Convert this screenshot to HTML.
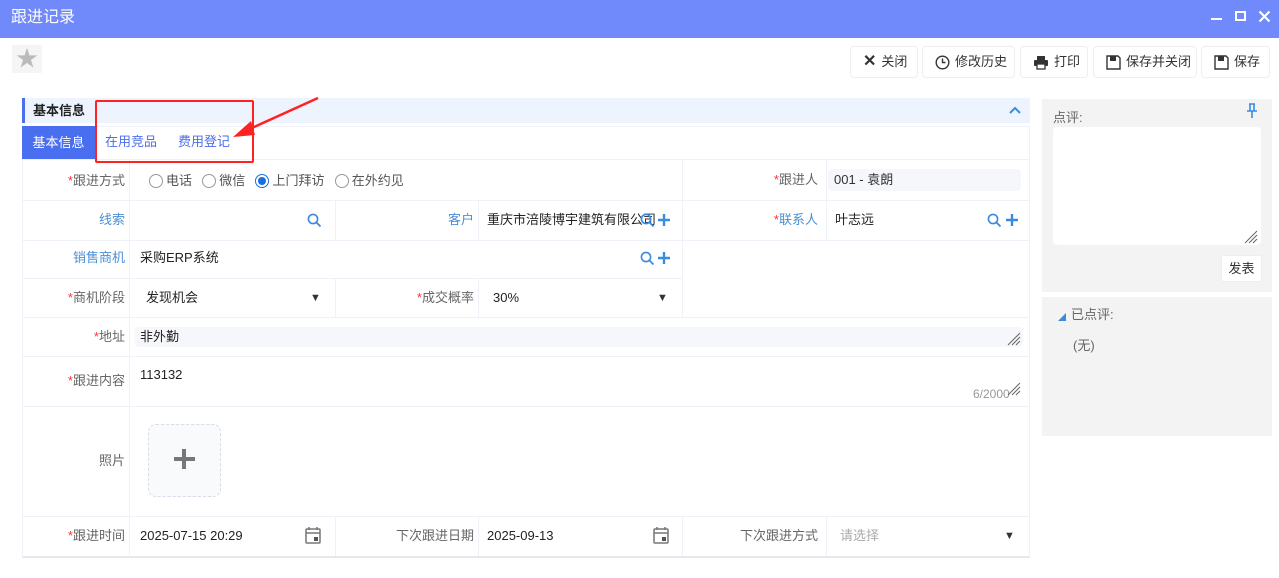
<!DOCTYPE html>
<html><head><meta charset="utf-8"><style>
*{margin:0;padding:0;box-sizing:border-box}
body{width:1279px;height:578px;background:#fff;font-family:"Liberation Sans","Noto Sans CJK SC",sans-serif;font-size:13px;color:#333;position:relative;overflow:hidden;line-height:16px}
.a{position:absolute}
.title{left:0;top:0;width:1279px;height:38px;background:#7089fb;color:#fff;font-size:16px;line-height:36px;padding-left:11px}
.btn{top:46px;height:32px;border:1px solid #eee;border-radius:4px;line-height:30px;font-size:13px;color:#333;padding-left:12px;display:flex;align-items:center;gap:5px}
.lab{text-align:right;color:#666;padding-right:4px;font-size:13px}
.blue{color:#4a8fd6}
.req{color:#f33}
.h{border-top:1px solid #eef2f8}
.v{border-left:1px solid #eef2f8}
.val{color:#222;font-size:13px}
</style></head><body>
<div class="a title">跟进记录</div>
<div class="a" style="left:1211px;top:18px;width:11px;height:2px;background:#fff"></div>
<div class="a" style="left:1235px;top:11px;width:11px;height:10px;border:2px solid #fff"></div>
<svg class="a" style="left:1258px;top:10px" width="13" height="13"><path d="M1.5 1.5L11.5 11.5M11.5 1.5L1.5 11.5" stroke="#fff" stroke-width="2.2"/></svg>
<div class="a" style="left:12px;top:45px;width:30px;height:28px;background:#f5f5f5;color:#bbb;font-size:22px;text-align:center;line-height:28px">★</div>

<div class="a btn" style="left:850px;width:68px"><b style="font-size:16px">✕</b>关闭</div>
<div class="a btn" style="left:922px;width:93px"><svg width="15" height="15"><circle cx="7.5" cy="7.5" r="6.3" fill="none" stroke="#333" stroke-width="1.4"/><path d="M7.5 3.5V7.5H10.5" fill="none" stroke="#333" stroke-width="1.4"/></svg>修改历史</div>
<div class="a btn" style="left:1020px;width:68px"><svg width="16" height="15"><rect x="4" y="1" width="8" height="4" fill="#333"/><rect x="1" y="5" width="14" height="6" rx="1" fill="#333"/><rect x="4" y="9" width="8" height="5" fill="#fff" stroke="#333" stroke-width="1.3"/></svg>打印</div>
<div class="a btn" style="left:1093px;width:104px"><svg width="15" height="15"><path d="M1 1H12L14 3V14H1Z" fill="none" stroke="#333" stroke-width="1.4"/><rect x="4" y="1" width="6" height="5" fill="#333"/></svg>保存并关闭</div>
<div class="a btn" style="left:1201px;width:69px"><svg width="15" height="15"><path d="M1 1H12L14 3V14H1Z" fill="none" stroke="#333" stroke-width="1.4"/><rect x="4" y="1" width="6" height="5" fill="#333"/></svg>保存</div>

<!-- section -->
<div class="a" style="left:22px;top:98px;width:1008px;height:25px;background:#eef4fd"></div>
<div class="a" style="left:22px;top:98px;width:3px;height:25px;background:#4a6ef0"></div>
<div class="a" style="left:33px;top:103px;font-weight:bold;font-size:13px;color:#222">基本信息</div>
<svg class="a" style="left:1008px;top:105px" width="14" height="10"><path d="M2 8L7 3L12 8" fill="none" stroke="#3a8be0" stroke-width="2"/></svg>
<div class="a" style="left:22px;top:126px;width:1008px;height:432px;border:1px solid #eef2f8;border-bottom:2px solid #e6e8ec"></div>
<div class="a" style="left:22px;top:126px;width:73px;height:33px;background:#4a6ef0;color:#fff;line-height:33px;text-align:center">基本信息</div>
<div class="a" style="left:105px;top:134px;color:#4a6ef0">在用竞品</div>
<div class="a" style="left:178px;top:134px;color:#4a6ef0">费用登记</div>

<!-- grid lines -->
<div class="a h" style="left:22px;top:159px;width:1008px"></div>
<div class="a h" style="left:22px;top:200px;width:1008px"></div>
<div class="a h" style="left:22px;top:240px;width:1008px"></div>
<div class="a h" style="left:22px;top:278px;width:660px"></div>
<div class="a h" style="left:22px;top:317px;width:1008px"></div>
<div class="a h" style="left:22px;top:356px;width:1008px"></div>
<div class="a h" style="left:22px;top:406px;width:1008px"></div>
<div class="a h" style="left:22px;top:516px;width:1008px"></div>
<div class="a v" style="left:129px;top:159px;height:398px"></div>
<div class="a v" style="left:682px;top:159px;height:158px"></div>
<div class="a v" style="left:826px;top:159px;height:81px"></div>
<div class="a v" style="left:335px;top:200px;height:40px"></div>
<div class="a v" style="left:478px;top:200px;height:40px"></div>
<div class="a v" style="left:335px;top:278px;height:39px"></div>
<div class="a v" style="left:478px;top:278px;height:39px"></div>
<div class="a v" style="left:335px;top:516px;height:40px"></div>
<div class="a v" style="left:478px;top:516px;height:40px"></div>
<div class="a v" style="left:682px;top:516px;height:40px"></div>
<div class="a v" style="left:826px;top:516px;height:40px"></div>

<!-- row1 -->
<div class="a lab" style="left:22px;top:173px;width:107px"><span class="req">*</span>跟进方式</div>
<div class="a" style="left:149px;top:173px;display:flex;align-items:center;gap:3px;color:#555">
<span style="width:14px;height:14px;border:1px solid #999;border-radius:50%;display:inline-block"></span>电话&nbsp;&nbsp;
<span style="width:14px;height:14px;border:1px solid #999;border-radius:50%;display:inline-block"></span>微信&nbsp;&nbsp;
<span style="width:14px;height:14px;border:1px solid #1a6fe0;border-radius:50%;display:inline-block;position:relative"><span style="position:absolute;left:2px;top:2px;width:8px;height:8px;border-radius:50%;background:#1a6fe0"></span></span>上门拜访&nbsp;&nbsp;
<span style="width:14px;height:14px;border:1px solid #999;border-radius:50%;display:inline-block"></span>在外约见</div>
<div class="a lab" style="left:682px;top:172px;width:140px"><span class="req">*</span>跟进人</div>
<div class="a" style="left:828px;top:169px;width:193px;height:22px;background:#f5f7fb;border-radius:4px;padding-left:6px;line-height:22px" >001 - 袁朗</div>

<!-- row2 -->
<div class="a lab blue" style="left:22px;top:212px;width:107px">线索</div>
<div class="a lab blue" style="left:335px;top:212px;width:143px">客户</div>
<div class="a val" style="left:487px;top:212px">重庆市涪陵博宇建筑有限公司</div>
<div class="a lab blue" style="left:682px;top:212px;width:140px"><span class="req">*</span>联系人</div>
<div class="a val" style="left:835px;top:212px">叶志远</div>

<!-- row3 -->
<div class="a lab blue" style="left:22px;top:250px;width:107px">销售商机</div>
<div class="a val" style="left:140px;top:250px">采购ERP系统</div>

<!-- row4 -->
<div class="a lab" style="left:22px;top:290px;width:107px"><span class="req">*</span>商机阶段</div>
<div class="a val" style="left:146px;top:290px">发现机会</div>
<div class="a" style="left:310px;top:290px;font-size:11px">▼</div>
<div class="a lab" style="left:335px;top:290px;width:143px"><span class="req">*</span>成交概率</div>
<div class="a val" style="left:493px;top:290px">30%</div>
<div class="a" style="left:657px;top:290px;font-size:11px">▼</div>

<!-- row5 -->
<div class="a lab" style="left:22px;top:329px;width:107px"><span class="req">*</span>地址</div>
<div class="a" style="left:135px;top:327px;width:888px;height:20px;background:#f5f7fb;border-radius:4px;padding-left:5px;line-height:20px;color:#222">非外勤</div>

<!-- row6 -->
<div class="a lab" style="left:22px;top:373px;width:107px"><span class="req">*</span>跟进内容</div>
<div class="a val" style="left:140px;top:367px">113132</div>
<div class="a" style="left:973px;top:386px;color:#999;font-size:12px">6/2000</div>

<!-- row7 -->
<div class="a lab" style="left:22px;top:453px;width:107px">照片</div>
<div class="a" style="left:148px;top:424px;width:73px;height:73px;border:1px dashed #d6dde8;border-radius:8px;background:#f9fafc"></div>
<div class="a" style="left:174px;top:457px;width:21px;height:4px;background:#777"></div>
<div class="a" style="left:182px;top:449px;width:4px;height:20px;background:#777"></div>

<!-- row8 -->
<div class="a lab" style="left:22px;top:528px;width:107px"><span class="req">*</span>跟进时间</div>
<div class="a val" style="left:140px;top:528px">2025-07-15 20:29</div>
<div class="a lab" style="left:335px;top:528px;width:143px">下次跟进日期</div>
<div class="a val" style="left:487px;top:528px">2025-09-13</div>
<div class="a lab" style="left:682px;top:528px;width:140px">下次跟进方式</div>
<div class="a" style="left:840px;top:528px;color:#aaa">请选择</div>
<div class="a" style="left:1004px;top:528px;font-size:11px">▼</div>

<!-- icons -->
<svg width="0" height="0" style="position:absolute"><defs>
<g id="s"><circle cx="6" cy="6" r="4.6" fill="none" stroke="#3a8be0" stroke-width="1.6"/><path d="M9.3 9.3L13.5 13.5" stroke="#3a8be0" stroke-width="1.8"/></g>
<g id="p"><path d="M6 0V12M0 6H12" stroke="#3a8be0" stroke-width="2.4"/></g>
<g id="c"><rect x="1" y="2" width="14" height="14" rx="1" fill="none" stroke="#777" stroke-width="1.5"/><path d="M1 6H15" stroke="#777" stroke-width="1.5"/><path d="M4 0V3M12 0V3" stroke="#777" stroke-width="1.5"/><rect x="9" y="10" width="4" height="4" fill="#555"/></g>
<g id="r"><path d="M13 1L1 13M13 5L5 13M13 9L9 13" stroke="#666" stroke-width="1"/></g>
</defs></svg>
<svg class="a" style="left:307px;top:213px" width="15" height="15"><use href="#s"/></svg>
<svg class="a" style="left:640px;top:213px" width="15" height="15"><use href="#s"/></svg>
<svg class="a" style="left:658px;top:214px" width="12" height="12"><use href="#p"/></svg>
<svg class="a" style="left:987px;top:213px" width="15" height="15"><use href="#s"/></svg>
<svg class="a" style="left:1006px;top:214px" width="12" height="12"><use href="#p"/></svg>
<svg class="a" style="left:640px;top:251px" width="15" height="15"><use href="#s"/></svg>
<svg class="a" style="left:658px;top:252px" width="12" height="12"><use href="#p"/></svg>
<svg class="a" style="left:305px;top:527px" width="16" height="18"><use href="#c"/></svg>
<svg class="a" style="left:653px;top:527px" width="16" height="18"><use href="#c"/></svg>
<svg class="a" style="left:1007px;top:332px" width="14" height="14"><use href="#r"/></svg>
<svg class="a" style="left:1007px;top:382px" width="14" height="14"><use href="#r"/></svg>

<!-- right panel -->
<div class="a" style="left:1042px;top:99px;width:230px;height:193px;background:#f3f3f3"></div>
<div class="a" style="left:1053px;top:110px;color:#666">点评:</div>
<svg class="a" style="left:1246px;top:103px" width="12" height="16"><path d="M3 1H9M4 1V8M8 1V8M1 8H11M6 8V15" fill="none" stroke="#3a8be0" stroke-width="1.6"/></svg>
<div class="a" style="left:1053px;top:127px;width:208px;height:118px;background:#fff;border-radius:4px"></div>
<svg class="a" style="left:1244px;top:230px" width="14" height="14"><use href="#r"/></svg>
<div class="a" style="left:1221px;top:255px;width:41px;height:27px;background:#fff;border:1px solid #eee;text-align:center;line-height:25px;color:#333">发表</div>
<div class="a" style="left:1042px;top:297px;width:230px;height:139px;background:#f3f3f3"></div>
<div class="a" style="left:1058px;top:310px;color:#3a8be0;font-size:8px">◢</div>
<div class="a" style="left:1071px;top:307px;color:#666">已点评:</div>
<div class="a" style="left:1073px;top:338px;color:#666">(无)</div>

<!-- annotation -->
<div class="a" style="left:95px;top:100px;width:159px;height:63px;border:2px solid #f22;border-radius:2px"></div>
<svg class="a" style="left:225px;top:95px" width="100" height="50"><path d="M93 3L18 37" stroke="#f22" stroke-width="2.5"/><path d="M8 42L26 26L30 40Z" fill="#f22"/></svg>
</body></html>
